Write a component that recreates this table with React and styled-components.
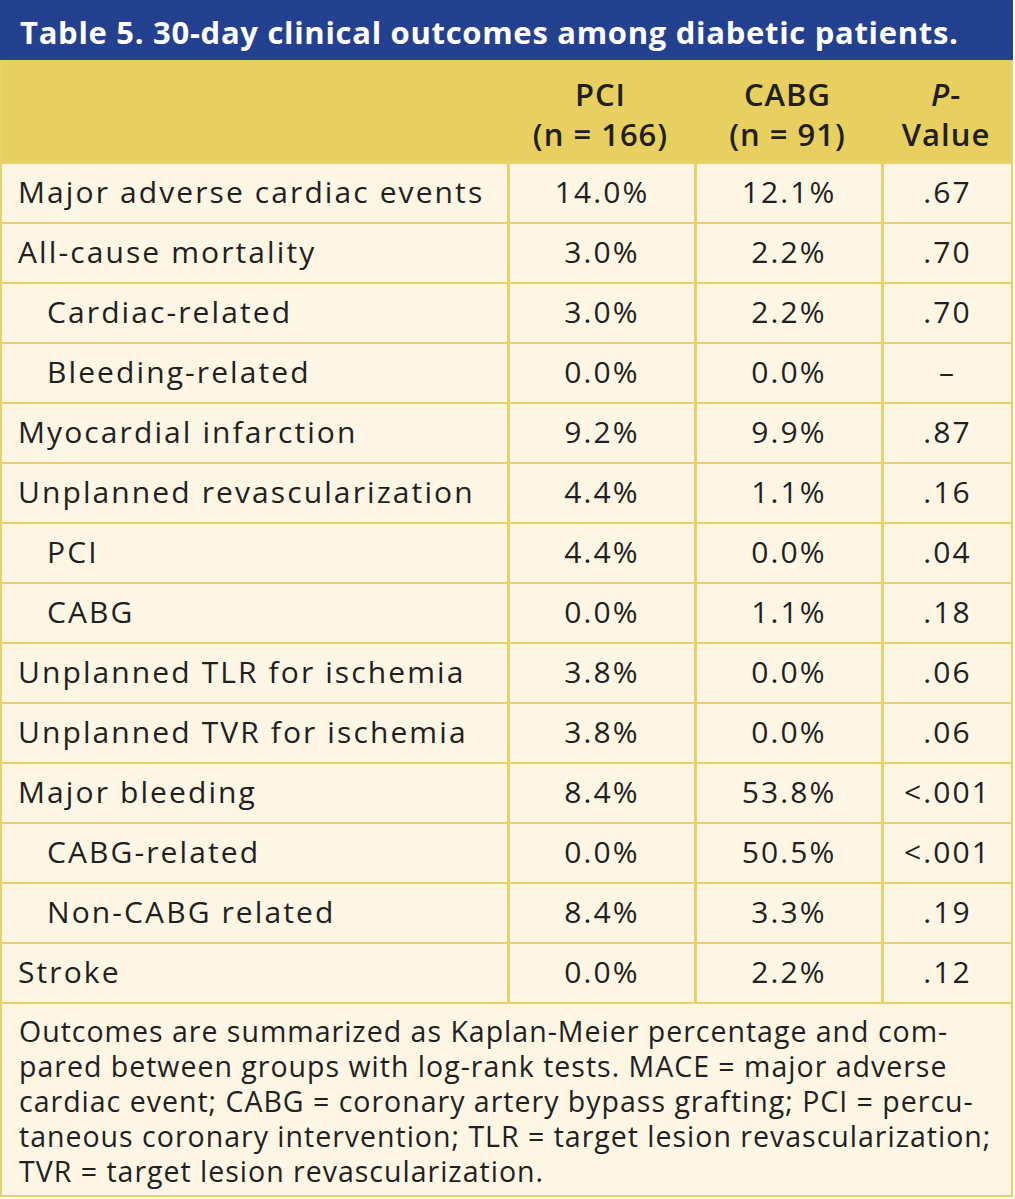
import React from "react";
import styled, { createGlobalStyle } from "styled-components";

const GlobalStyle = createGlobalStyle`
  html, body {
    margin: 0;
    padding: 0;
    background: #ffffff;
  }
  body {
    font-family: "Open Sans", "Liberation Sans", sans-serif;
    color: #231f20;
  }
`;

const Frame = styled.div`
  width: 1015px;
  box-sizing: border-box;
  padding: 0 2px 2px 0;
`;

const Card = styled.div`
  width: 1013px;
  box-sizing: border-box;
  background: #fef6e5;
  border: solid 2px #e8d36b;
  border-top: none;
`;

const Title = styled.div`
  height: 60px;
  box-sizing: border-box;
  margin: 0 -2px;
  padding: 3px 0 0 20px;
  display: flex;
  align-items: center;
  background: #24418f;
  color: #ffffff;
  font-size: 31px;
  font-weight: 700;
  letter-spacing: 0.7px;
`;

const Grid = styled.div`
  display: grid;
  grid-template-columns: 505px 187px 187px 1fr;
`;

const HeadCell = styled.div`
  height: 102px;
  box-sizing: border-box;
  background: #e8d060;
  display: flex;
  flex-direction: column;
  align-items: center;
  justify-content: center;
  padding-top: 6px;
  font-size: 31px;
  font-weight: 600;
  line-height: 40px;
  letter-spacing: 1px;
  text-align: center;
`;

const Cell = styled.div`
  height: 60px;
  box-sizing: border-box;
  border-top: solid 2px #e8d36b;
  border-left: ${(p) => (p.first ? "none" : "solid 3px #e8d36b")};
  display: flex;
  align-items: center;
  justify-content: ${(p) => (p.first ? "flex-start" : "center")};
  padding-left: ${(p) => (p.first ? (p.indent ? "45px" : "16px") : "0")};
  padding-bottom: 4px;
  font-size: 30px;
  letter-spacing: 2.1px;
  white-space: nowrap;
`;

const Note = styled.div`
  border-top: solid 2px #e8d36b;
  padding: 10px 12px 6px 17px;
  font-size: 28.5px;
  line-height: 35px;
  letter-spacing: 1px;
  white-space: nowrap;
`;

const rows = [
  ["Major adverse cardiac events", "14.0%", "12.1%", ".67"],
  ["All-cause mortality", "3.0%", "2.2%", ".70"],
  ["Cardiac-related", "3.0%", "2.2%", ".70", true],
  ["Bleeding-related", "0.0%", "0.0%", "\u2013", true],
  ["Myocardial infarction", "9.2%", "9.9%", ".87"],
  ["Unplanned revascularization", "4.4%", "1.1%", ".16"],
  ["PCI", "4.4%", "0.0%", ".04", true],
  ["CABG", "0.0%", "1.1%", ".18", true],
  ["Unplanned TLR for ischemia", "3.8%", "0.0%", ".06"],
  ["Unplanned TVR for ischemia", "3.8%", "0.0%", ".06"],
  ["Major bleeding", "8.4%", "53.8%", "<.001"],
  ["CABG-related", "0.0%", "50.5%", "<.001", true],
  ["Non-CABG related", "8.4%", "3.3%", ".19", true],
  ["Stroke", "0.0%", "2.2%", ".12"],
];

const noteLines = [
  "Outcomes are summarized as Kaplan-Meier percentage and com-",
  "pared between groups with log-rank tests. MACE = major adverse",
  "cardiac event; CABG = coronary artery bypass grafting; PCI = percu-",
  "taneous coronary intervention; TLR = target lesion revascularization;",
  "TVR = target lesion revascularization.",
];

export default function App() {
  return (
    <Frame>
      <GlobalStyle />
      <Card>
        <Title>Table 5. 30-day clinical outcomes among diabetic patients.</Title>
        <Grid>
          <HeadCell />
          <HeadCell>
            <span>PCI</span>
            <span>(n = 166)</span>
          </HeadCell>
          <HeadCell>
            <span>CABG</span>
            <span>(n = 91)</span>
          </HeadCell>
          <HeadCell>
            <span>
              <i>P</i>-
            </span>
            <span>Value</span>
          </HeadCell>
          {rows.map((r) => (
            <React.Fragment key={r[0]}>
              <Cell first indent={r[4]}>
                {r[0]}
              </Cell>
              <Cell>{r[1]}</Cell>
              <Cell>{r[2]}</Cell>
              <Cell>{r[3]}</Cell>
            </React.Fragment>
          ))}
        </Grid>
        <Note>
          {noteLines.map((l, i) => (
            <div key={i}>{l}</div>
          ))}
        </Note>
      </Card>
    </Frame>
  );
}
